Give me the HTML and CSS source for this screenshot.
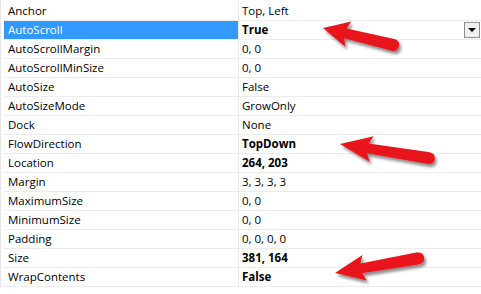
FILE: index.html
```html
<!DOCTYPE html>
<html lang="en">
<head>
    <meta charset="utf-8">
    <title>Properties</title>
    <link rel="stylesheet" href="styles.css">
</head>
<body>
    <div class="grid">
        <div class="row"><div class="name">Anchor</div><div class="value">Top, Left</div></div>
        <div class="row selected"><div class="name">AutoScroll</div><div class="value bold">True<span class="drop"></span></div></div>
        <div class="row"><div class="name">AutoScrollMargin</div><div class="value">0, 0</div></div>
        <div class="row"><div class="name">AutoScrollMinSize</div><div class="value">0, 0</div></div>
        <div class="row"><div class="name">AutoSize</div><div class="value">False</div></div>
        <div class="row"><div class="name">AutoSizeMode</div><div class="value">GrowOnly</div></div>
        <div class="row"><div class="name">Dock</div><div class="value">None</div></div>
        <div class="row"><div class="name">FlowDirection</div><div class="value bold">TopDown</div></div>
        <div class="row"><div class="name">Location</div><div class="value bold">264, 203</div></div>
        <div class="row"><div class="name">Margin</div><div class="value">3, 3, 3, 3</div></div>
        <div class="row"><div class="name">MaximumSize</div><div class="value">0, 0</div></div>
        <div class="row"><div class="name">MinimumSize</div><div class="value">0, 0</div></div>
        <div class="row"><div class="name">Padding</div><div class="value">0, 0, 0, 0</div></div>
        <div class="row"><div class="name">Size</div><div class="value bold">381, 164</div></div>
        <div class="row"><div class="name">WrapContents</div><div class="value bold">False</div></div>
    </div>

    <!-- annotation arrows drawn over the grid -->
    <svg class="arrows" width="481" height="294" viewBox="0 0 481 294">
        <defs>
            <filter id="shadow" x="-20%" y="-50%" width="140%" height="200%">
                <feDropShadow dx="2" dy="3" stdDeviation="1.6" flood-color="#000" flood-opacity="0.45"/>
            </filter>
            <path id="arrow" d="M0 0 L26 -13 L23 -5 L72 -6 Q78 -6 78 0 Q78 6 72 6 L23 5 L26 13 Z"/>
        </defs>
        <g fill="#e8171b" filter="url(#shadow)">
            <use href="#arrow" transform="translate(323 28) rotate(13.5)"/>
            <use href="#arrow" transform="translate(340 144) rotate(9) scale(1.23 1)"/>
            <use href="#arrow" transform="translate(335 273) rotate(-10) scale(1.16 1)"/>
        </g>
    </svg>
</body>
</html>
```

FILE: styles.css
```css
body {
    margin: 0;
    background-color: #fff;
    font-family: "Open Sans", "Noto Sans", sans-serif;
    font-size: 11.5px;
    color: #000;
    position: relative;
    width: 481px;
    height: 294px;
    overflow: hidden;
}
.grid {
    padding-top: 2px;
    padding-left: 3px;
    border-left: 1px solid #e6e6e6;
}
.row {
    display: flex;
    height: 19px;
    box-sizing: border-box;
    border-bottom: 1px solid #ececec;
}
.name {
    width: 230px;
    padding-left: 4px;
    line-height: 18px;
    border-right: 1px solid #ececec;
    white-space: nowrap;
}
.value {
    flex: 1;
    position: relative;
    padding-left: 3px;
    line-height: 18px;
    white-space: nowrap;
}
.bold {
    font-weight: bold;
}
.selected .name {
    background-color: #3399ff;
    color: #fff;
}
.drop {
    position: absolute;
    right: 1px;
    top: 1px;
    width: 14px;
    height: 14px;
    border: 1px solid #8c8c8c;
    background-color: #f0f0f0;
}
.drop::after {
    content: "";
    position: absolute;
    left: 3px;
    top: 5px;
    border-left: 4px solid transparent;
    border-right: 4px solid transparent;
    border-top: 4px solid #000;
}
.arrows {
    position: absolute;
    left: 0;
    top: 0;
}
```
